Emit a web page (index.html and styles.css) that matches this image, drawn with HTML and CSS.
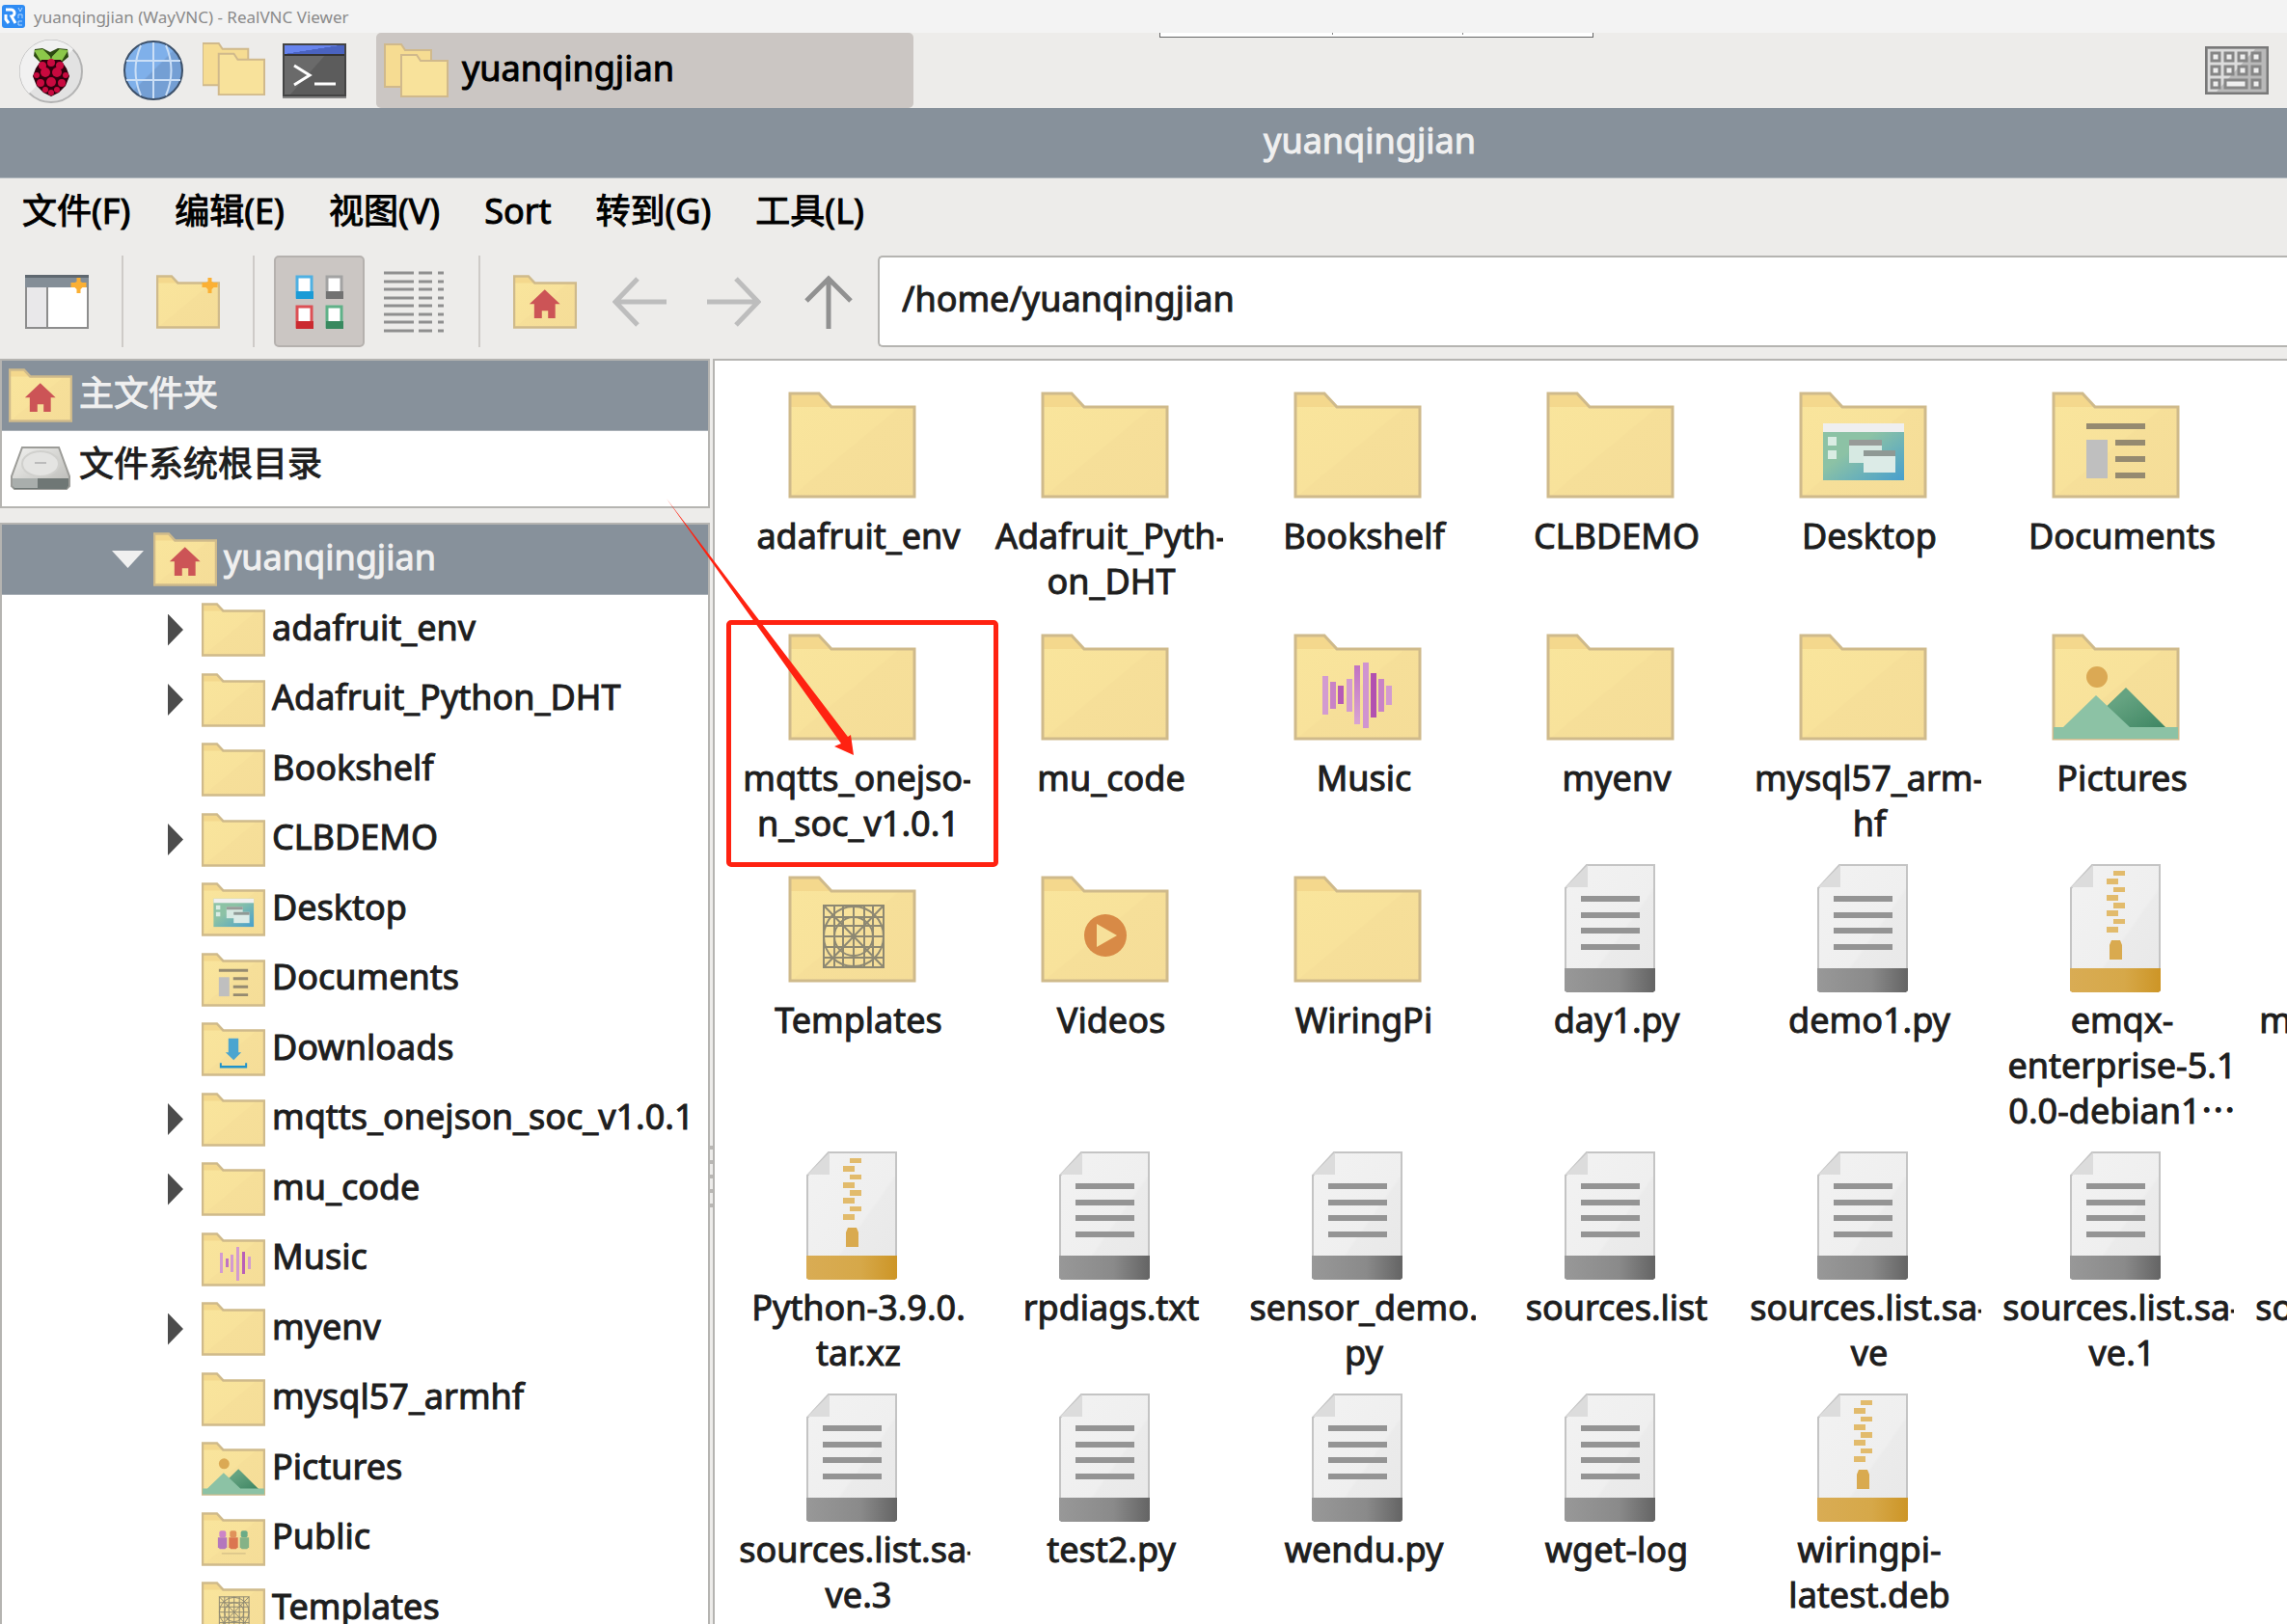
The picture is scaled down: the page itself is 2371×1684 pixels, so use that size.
FILE: index.html
```html
<!DOCTYPE html>
<html lang="zh-CN">
<head>
<meta charset="utf-8">
<title>yuanqingjian (WayVNC) - RealVNC Viewer</title>
<link rel="stylesheet" href="styles.css">
</head>
<body>
<svg class="defs" width="0" height="0" aria-hidden="true">
  <defs>
    <linearGradient id="gFolder" x1="0" y1="0" x2="1" y2="1"><stop offset="0" stop-color="#f9e59c"/><stop offset=".5" stop-color="#f8e29b"/><stop offset=".51" stop-color="#f6df99"/><stop offset="1" stop-color="#f5dd98"/></linearGradient>
    <linearGradient id="gDesk" x1="0" y1="0" x2="1" y2="1"><stop offset=".4" stop-color="#8cc2a5"/><stop offset="1" stop-color="#479fce"/></linearGradient>
    <linearGradient id="gHill" x1="0" y1="0" x2="1" y2="1"><stop offset=".3" stop-color="#65a381"/><stop offset="1" stop-color="#3d8562"/></linearGradient>
    <linearGradient id="gPage" x1="0" y1="0" x2="1" y2="1"><stop offset="0" stop-color="#f2f2f2"/><stop offset=".58" stop-color="#efefef"/><stop offset=".6" stop-color="#ebebeb"/><stop offset="1" stop-color="#e8e8e8"/></linearGradient>
    <linearGradient id="gGrey"><stop offset="0" stop-color="#989898"/><stop offset=".6" stop-color="#8a8a8a"/><stop offset="1" stop-color="#646464"/></linearGradient>
    <linearGradient id="gGold"><stop offset="0" stop-color="#d9ac54"/><stop offset=".6" stop-color="#d6a849"/><stop offset="1" stop-color="#cd9526"/></linearGradient>
    <linearGradient id="gBar" x1="0" y1="0" x2="0" y2="1"><stop offset="0" stop-color="#c173c3"/><stop offset="1" stop-color="#d9a4d2"/></linearGradient>
    <linearGradient id="gDrive" x1="0" y1="0" x2="1" y2="1"><stop offset="0" stop-color="#f2f2f0"/><stop offset="1" stop-color="#b8b8b4"/></linearGradient>
    <linearGradient id="gGlobe" x1="0" y1="0" x2="1" y2="1"><stop offset=".49" stop-color="#7fb0ea"/><stop offset=".51" stop-color="#749fd4"/></linearGradient>
    <linearGradient id="gBlue" x1="0" y1="0" x2="1" y2="1"><stop offset=".5" stop-color="#6784ee"/><stop offset=".51" stop-color="#4a63c0"/></linearGradient>
  </defs>

  <symbol id="folder" viewBox="0 0 133 111">
    <path d="M2 2H32L45 16H131V109H2Z" fill="url(#gFolder)" stroke="none"/>
    <path d="M2 2H32L45 16H2Z" fill="#f4d88d" stroke="none"/>
    <path d="M2 2H32L45 16H131V109H2Z" fill="none" stroke="#cfba8b"/>
  </symbol>

  <symbol id="e-home" viewBox="0 0 133 111"><g stroke="none"><path d="M66 30L98 60H88V90H73V74H60V90H44V60H34Z" fill="#cc5456"/></g></symbol>

  <symbol id="e-desktop" viewBox="0 0 133 111"><g stroke="none">
    <rect x="25" y="33" width="84" height="59" fill="url(#gDesk)"/><rect x="25" y="33" width="84" height="9" fill="#efeff0"/>
    <path d="M30 47h9v9h-9zM30 61h9v9h-9z" fill="#d9ece3"/>
    <rect x="52" y="50" width="34" height="24" fill="#d6e9e2"/><rect x="52" y="50" width="34" height="6" fill="#979b98"/>
    <rect x="67" y="61" width="33" height="23" fill="#dcebe7"/><rect x="67" y="61" width="33" height="6" fill="#8f9995"/></g></symbol>

  <symbol id="e-documents" viewBox="0 0 133 111"><g stroke="none"><path d="M36 33h61v6H36zM66 50h31v6H66zM66 67h31v6H66zM66 84h31v6H66z" fill="#958a70"/><rect x="36" y="50" width="22" height="40" fill="#bfbfbf"/></g></symbol>

  <symbol id="e-music" viewBox="0 0 133 111"><g stroke="none" fill="url(#gBar)">
    <rect x="30" y="44" width="6" height="40" fill="#d39bd0"/><rect x="38" y="50" width="6" height="28" fill="#c983c6"/><rect x="46" y="54" width="6" height="19" fill="#b65bb5"/><rect x="55" y="47" width="6" height="34" fill="#d39bd0"/><rect x="63" y="33" width="6" height="61"/><rect x="72" y="30" width="6" height="68" fill="#d094d0"/><rect x="80" y="41" width="6" height="46" fill="#b250b0"/><rect x="88" y="47" width="6" height="34" fill="#c983c6"/><rect x="96" y="54" width="6" height="20" fill="#d39bd0"/></g></symbol>

  <symbol id="e-music-s" viewBox="0 0 66 56"><g stroke="none" fill="#d39bd0"><rect x="19" y="21" width="3" height="21"/><rect x="25" y="27" width="3" height="9" fill="#c173c3"/><rect x="30" y="23" width="3" height="18"/><rect x="36" y="15" width="3" height="35"/><rect x="42" y="20" width="3" height="23" fill="#b95fb8"/><rect x="48" y="25" width="3" height="13"/></g></symbol>

  <symbol id="e-pictures" viewBox="0 0 133 111"><g stroke="none"><circle cx="47" cy="45" r="11" fill="#dba954"/><path d="M77 56L119 98H50V82Z" fill="url(#gHill)"/><path d="M2 97H12L46 64L81 97H131V109H2Z" fill="#8cc2a5"/></g></symbol>

  <symbol id="e-templates" viewBox="0 0 133 111"><g fill="none" stroke="#8d8872" stroke-width="2"><rect x="37" y="31" width="62" height="64"/><path d="M48 31V95M57 31V95M68 31V95M79 31V95M88 31V95M37 43H99M37 52H99M37 63H99M37 74H99M37 85H99M37 31L99 95M99 31L37 95"/><circle cx="68" cy="63" r="31"/><circle cx="68" cy="63" r="20"/></g></symbol>

  <symbol id="e-videos" viewBox="0 0 133 111"><g stroke="none"><circle cx="67" cy="62" r="22" fill="#d88a46"/><path d="M58 50L79 62L58 74Z" fill="#f7e09a"/></g></symbol>

  <symbol id="e-downloads" viewBox="0 0 133 111"><g stroke="none"><path d="M56 33H77V62H83L67 78L50 62H56Z" fill="#4ba5d0"/><path d="M38 84H42V90H91V84H95V95H38Z" fill="#1f93cb"/></g></symbol>

  <symbol id="e-public" viewBox="0 0 133 111"><g stroke="none"><rect x="37" y="38" width="14" height="14" rx="4" fill="#cc84c8"/><path d="M34 52H53V72L49 76H38L34 72Z" fill="#b477bd"/><rect x="59" y="38" width="14" height="14" rx="4" fill="#e0925a"/><path d="M57 52H76V72L72 76H61L57 72Z" fill="#db7650"/><rect x="82" y="38" width="14" height="14" rx="4" fill="#6aab87"/><path d="M80 52H99V72L95 76H84L80 72Z" fill="#85b287"/><rect x="42" y="84" width="50" height="3" fill="#d8c38a"/></g></symbol>

  <symbol id="page" viewBox="0 0 133 133">
    <path d="M42 1H112V131H20V25Z" fill="url(#gPage)" stroke="#c4c4c4" stroke-width="2"/>
    <path d="M43 1V24H20Z" fill="#dcdcdc"/>
  </symbol>
  <symbol id="text-file" viewBox="0 0 133 133"><use href="#page" width="133" height="133"/>
    <path d="M19 108H113V131L111 133H21L19 131Z" fill="url(#gGrey)"/>
    <path d="M36 33h61v6H36zM36 50h61v6H36zM36 66h61v6H36zM36 83h61v6H36z" fill="#949494"/></symbol>
  <symbol id="zip-file" viewBox="0 0 133 133"><use href="#page" width="133" height="133"/>
    <path d="M19 108H113V131L111 133H21L19 131Z" fill="url(#gGold)"/>
    <path d="M64 7h12v5H64zM57 15h12v6H57zM64 24h12v5H64zM57 32h12v6H57zM64 40h12v6H64zM57 48h12v6H57zM64 57h12v5H64zM57 65h12v6H57z" fill="#e2bb6c"/>
    <path d="M62 79H71L73 84V99H60V84Z" fill="#d9aa4f"/></symbol>

  <symbol id="folders" viewBox="0 0 67 57"><g stroke="#d0b98c" stroke-width="2">
    <path d="M1 1H18L22 7H49V45H1Z" fill="#f6dc92"/><path d="M18 12H34L38 18H66V55H18Z" fill="#f8e29b"/></g></symbol>
  <symbol id="star" viewBox="0 0 16 16"><path d="M6 0h4v4l2 1h4v5h-4l-2 2v4H6v-4l-2-2H0V5h4l2-1z" fill="#fbb034"/></symbol>
</svg>

<header class="viewer-title">
  <svg class="vnc-logo" viewBox="0 0 24 24"><rect width="24" height="24" rx="3" fill="#2f8cf4"/><path d="M4 5h5a3 3 0 0 1 1 7l4 7M4 10v5l3 4" fill="none" stroke="#fff" stroke-width="3"/><path d="M17 3l2 4 2-4M17 14v-4h4v4M21 17h-4v4h4" fill="none" stroke="#b5d6fb" stroke-width="1"/></svg>
  <span>yuanqingjian (WayVNC) - RealVNC Viewer</span>
</header>

<div class="viewer-handle" aria-hidden="true"><i></i><i></i><i></i></div>

<nav class="taskbar" aria-label="Taskbar">
  <button class="launch menu-launch" aria-label="Menu"><svg viewBox="0 0 68 68"><circle cx="34" cy="34" r="32" fill="#e2e2e2" stroke="#b3b3b3" stroke-width="2"/><path d="M11 57A32 32 0 0 1 57 11Z" fill="#f1f1f1"/>
    <path d="M17 11l8-1 8 4 8-4 10 1 1 8-6 5-12 2-12-2-6-6z" fill="#2d4a12"/><path d="M18 13l7-1 7 7 1 3-9 1zM50 13l-7-1-7 7-1 3 9 1z" fill="#8cc84a" stroke="#8cc84a" stroke-width="2"/>
    <path d="M24 22h20l6 9 3 8-4 10-7 7-8 4-8-4-7-7-4-10 3-8z" fill="#30000d"/>
    <g fill="#c9093f"><circle cx="34" cy="25" r="4"/><circle cx="25" cy="28" r="4"/><circle cx="43" cy="28" r="4"/><circle cx="28" cy="35" r="5"/><circle cx="40" cy="35" r="5"/><circle cx="19" cy="38" r="3"/><circle cx="49" cy="38" r="3"/><circle cx="34" cy="45" r="5"/><circle cx="23" cy="46" r="4"/><circle cx="45" cy="46" r="4"/><circle cx="28" cy="53" r="3"/><circle cx="40" cy="53" r="3"/><circle cx="34" cy="56" r="3"/></g></svg></button>
  <button class="launch" aria-label="Web"><svg viewBox="1 0 66 66"><circle cx="33" cy="33" r="30" fill="url(#gGlobe)" stroke="#3c5069" stroke-width="2"/><path d="M33 4V62M5 23H61M5 43H61M20 7Q9 33 20 59M46 7Q57 33 46 59" fill="none" stroke="#cbdff6" stroke-width="2"/></svg></button>
  <button class="launch" aria-label="Files"><svg viewBox="1 -4 67 67"><use href="#folders" width="67" height="57"/></svg></button>
  <button class="launch" aria-label="Terminal"><svg viewBox="0 0 66 66"><rect y="5" width="66" height="56" rx="1" fill="#5c5c5c"/><path d="M2 15H46L8 58H2Z" fill="#6a6a6a"/><rect x="1" y="6" width="64" height="10" fill="url(#gBlue)"/><rect x="1" y="16" width="64" height="2" fill="#333"/><rect x="1" y="6" width="64" height="53" fill="none" stroke="#444" stroke-width="2"/><path d="M0 60H66V62H0Z" fill="#848484"/><path d="M12 28L28 38L12 48" fill="none" stroke="#fff" stroke-width="3"/><path d="M33 47H55" stroke="#fff" stroke-width="3"/></svg></button>
  <button class="task"><svg class="task-icon" viewBox="0 0 67 57"><use href="#folders"/></svg><span class="cap">yuanqingjian</span></button>
  <button class="tray" aria-label="Keyboard"><svg viewBox="0 0 66 50"><rect x="1" y="1" width="64" height="48" fill="#b9b9b9" stroke="#797979" stroke-width="3"/><path d="M3 3H52L12 47H3Z" fill="#dcdcdc"/><g fill="#efefef" stroke="#868686" stroke-width="3"><path d="M7 7h8v8H7zM21 7h8v8h-8zM35 7h8v8h-8zM49 7h8v8h-8zM7 21h8v8H7zM21 21h8v8h-8zM35 21h8v8h-8zM49 21h8v8h-8zM7 35h8v8H7zM21 35h22v8H21zM49 35h8v8h-8z"/></g></svg></button>
</nav>

<div class="window-title"><span class="cap">yuanqingjian</span></div>

<nav class="menubar" aria-label="Menu bar">
  <button>文件(F)</button><button>编辑(E)</button><button>视图(V)</button><button>Sort</button><button>转到(G)</button><button>工具(L)</button>
</nav>

<div class="toolbar">
  <button aria-label="New window"><svg width="66" height="56" viewBox="0 0 66 56"><rect x="1" y="1" width="64" height="54" fill="#fff" stroke="#8d8d8d" stroke-width="2"/><rect x="2" y="13" width="21" height="41" fill="#e9e8ea"/><path d="M23 13V54" stroke="#8d8d8d" stroke-width="2"/><rect width="66" height="13" fill="#848e97"/><rect width="66" height="3" fill="#5f6870"/><use href="#star" x="47" y="3" width="17" height="16"/></svg></button>
  <i class="sep"></i>
  <button aria-label="New folder"><svg width="66" height="56" viewBox="0 0 66 56" class="sm"><use href="#folder" width="66" height="56"/><use href="#star" x="47" y="3" width="17" height="16"/></svg></button>
  <i class="sep"></i>
  <button class="on" aria-label="Icon view" aria-pressed="true"><svg width="50" height="56" viewBox="0 0 50 56">
    <g fill="#fff" stroke-width="3"><rect x="2" y="2" width="15" height="21" stroke="#4fb0e2"/><rect x="33" y="2" width="15" height="21" stroke="#a3a3a3"/><rect x="2" y="33" width="15" height="21" stroke="#dc5055"/><rect x="33" y="33" width="15" height="21" stroke="#5fb188"/></g>
    <path d="M1 17h18v8H1z" fill="#1b9bd6"/><path d="M32 17h18v8H32z" fill="#727272"/><path d="M1 48h18v8H1z" fill="#cb2a30"/><path d="M32 48h18v8H32z" fill="#38895f"/></svg></button>
  <button aria-label="List view"><svg width="62" height="64" viewBox="0 0 62 64"><path d="M0 2H31M0 11H31M0 19H31M0 28H31M0 36H31M0 45H31M0 53H31M0 62H31M36 2H50M36 11H50M36 19H50M36 28H50M36 36H50M36 45H50M36 53H50M36 62H50M56 2H62M56 11H62M56 19H62M56 28H62M56 36H62M56 45H62M56 53H62M56 62H62" stroke="#8f8f8f" stroke-width="3"/></svg></button>
  <i class="sep"></i>
  <button aria-label="Home"><svg width="66" height="56" viewBox="0 0 66 56" class="sm"><use href="#folder" width="66" height="56"/><use href="#e-home" width="66" height="56"/></svg></button>
  <button aria-label="Back"><svg width="56" height="56" viewBox="0 0 56 56"><path d="M56 28H3M26 4L3 28L26 52" fill="none" stroke="#bdbdbd" stroke-width="5"/></svg></button>
  <button aria-label="Forward"><svg width="56" height="56" viewBox="0 0 56 56"><path d="M0 28H53M30 4L53 28L30 52" fill="none" stroke="#bdbdbd" stroke-width="5"/></svg></button>
  <button aria-label="Up"><svg width="50" height="56" viewBox="0 0 50 56"><path d="M25 56V4M2 27L25 4L48 27" fill="none" stroke="#919191" stroke-width="5"/></svg></button>
  <input class="path" type="text" value="/home/yuanqingjian" aria-label="Path">
</div>

<main class="panes">
  <aside class="side">
    <ul class="places">
      <li><a href="#" class="row sel"><svg class="sm"><use href="#folder"/><use href="#e-home"/></svg><span class="cap">主文件夹</span></a></li>
      <li><a href="#" class="row"><svg class="sm" viewBox="0 0 66 56"><path d="M14 8H52L63 38V48L60 51H6L3 48V38Z" fill="url(#gDrive)" stroke="#9c9c98" stroke-width="2"/><ellipse cx="33" cy="25" rx="19" ry="13" fill="#e4e4e2" stroke="#d0d0cd" stroke-width="2"/><path d="M27 24H39" stroke="#bbb" stroke-width="2"/><path d="M4 40H62V48L60 51H6L4 48Z" fill="#6f7775"/><path d="M4 40H30V50H6L4 48Z" fill="#a9aeac"/></svg><span class="cap">文件系统根目录</span></a></li>
    </ul>
    <ul class="tree">
      <li><a href="#" class="row sel root"><i class="tri open"></i><svg class="sm"><use href="#folder"/><use href="#e-home"/></svg><span class="cap">yuanqingjian</span></a></li>
      <li><a href="#" class="row"><i class="tri"></i><svg class="sm"><use href="#folder"/></svg><span class="cap">adafruit_env</span></a></li>
      <li><a href="#" class="row"><i class="tri"></i><svg class="sm"><use href="#folder"/></svg><span class="cap">Adafruit_Python_DHT</span></a></li>
      <li><a href="#" class="row"><i class="tri none"></i><svg class="sm"><use href="#folder"/></svg><span class="cap">Bookshelf</span></a></li>
      <li><a href="#" class="row"><i class="tri"></i><svg class="sm"><use href="#folder"/></svg><span class="cap">CLBDEMO</span></a></li>
      <li><a href="#" class="row"><i class="tri none"></i><svg class="sm"><use href="#folder"/><use href="#e-desktop"/></svg><span class="cap">Desktop</span></a></li>
      <li><a href="#" class="row"><i class="tri none"></i><svg class="sm"><use href="#folder"/><use href="#e-documents"/></svg><span class="cap">Documents</span></a></li>
      <li><a href="#" class="row"><i class="tri none"></i><svg class="sm"><use href="#folder"/><use href="#e-downloads"/></svg><span class="cap">Downloads</span></a></li>
      <li><a href="#" class="row"><i class="tri"></i><svg class="sm"><use href="#folder"/></svg><span class="cap">mqtts_onejson_soc_v1.0.1</span></a></li>
      <li><a href="#" class="row"><i class="tri"></i><svg class="sm"><use href="#folder"/></svg><span class="cap">mu_code</span></a></li>
      <li><a href="#" class="row"><i class="tri none"></i><svg class="sm"><use href="#folder"/><use href="#e-music-s"/></svg><span class="cap">Music</span></a></li>
      <li><a href="#" class="row"><i class="tri"></i><svg class="sm"><use href="#folder"/></svg><span class="cap">myenv</span></a></li>
      <li><a href="#" class="row"><i class="tri none"></i><svg class="sm"><use href="#folder"/></svg><span class="cap">mysql57_armhf</span></a></li>
      <li><a href="#" class="row"><i class="tri none"></i><svg class="sm"><use href="#folder"/><use href="#e-pictures"/></svg><span class="cap">Pictures</span></a></li>
      <li><a href="#" class="row"><i class="tri none"></i><svg class="sm"><use href="#folder"/><use href="#e-public"/></svg><span class="cap">Public</span></a></li>
      <li><a href="#" class="row"><i class="tri none"></i><svg class="sm"><use href="#folder"/><use href="#e-templates"/></svg><span class="cap">Templates</span></a></li>
    </ul>
  </aside>

  <div class="splitter" aria-hidden="true"><i></i><i></i><i></i><i></i><i></i></div>

  <section class="files">
    <ul class="grid">
      <li><svg class="lg"><use href="#folder" y="12" height="111"/></svg><span>adafruit_env</span></li>
      <li><svg class="lg"><use href="#folder" y="12" height="111"/></svg><span>Adafruit_Pyth-<br>on_DHT</span></li>
      <li><svg class="lg"><use href="#folder" y="12" height="111"/></svg><span>Bookshelf</span></li>
      <li><svg class="lg"><use href="#folder" y="12" height="111"/></svg><span>CLBDEMO</span></li>
      <li><svg class="lg"><use href="#folder" y="12" height="111"/><use href="#e-desktop" y="12" height="111"/></svg><span>Desktop</span></li>
      <li><svg class="lg"><use href="#folder" y="12" height="111"/><use href="#e-documents" y="12" height="111"/></svg><span>Documents</span></li>
      <li></li>

      <li><svg class="lg"><use href="#folder" y="12" height="111"/></svg><span>mqtts_onejso-<br>n_soc_v1.0.1</span></li>
      <li><svg class="lg"><use href="#folder" y="12" height="111"/></svg><span>mu_code</span></li>
      <li><svg class="lg"><use href="#folder" y="12" height="111"/><use href="#e-music" y="12" height="111"/></svg><span>Music</span></li>
      <li><svg class="lg"><use href="#folder" y="12" height="111"/></svg><span>myenv</span></li>
      <li><svg class="lg"><use href="#folder" y="12" height="111"/></svg><span>mysql57_arm-<br>hf</span></li>
      <li><svg class="lg"><use href="#folder" y="12" height="111"/><use href="#e-pictures" y="12" height="111"/></svg><span>Pictures</span></li>
      <li></li>

      <li><svg class="lg"><use href="#folder" y="12" height="111"/><use href="#e-templates" y="12" height="111"/></svg><span>Templates</span></li>
      <li><svg class="lg"><use href="#folder" y="12" height="111"/><use href="#e-videos" y="12" height="111"/></svg><span>Videos</span></li>
      <li><svg class="lg"><use href="#folder" y="12" height="111"/></svg><span>WiringPi</span></li>
      <li><svg class="lg"><use href="#text-file"/></svg><span>day1.py</span></li>
      <li><svg class="lg"><use href="#text-file"/></svg><span>demo1.py</span></li>
      <li><svg class="lg"><use href="#zip-file"/></svg><span>emqx-<br>enterprise-5.1<br>0.0-debian1<b class="dots">…</b></span></li>
      <li><svg class="lg"><use href="#text-file"/></svg><span>mqtts_onejso-</span></li>

      <li><svg class="lg"><use href="#zip-file"/></svg><span>Python-3.9.0.<br>tar.xz</span></li>
      <li><svg class="lg"><use href="#text-file"/></svg><span>rpdiags.txt</span></li>
      <li><svg class="lg"><use href="#text-file"/></svg><span>sensor_demo.<br>py</span></li>
      <li><svg class="lg"><use href="#text-file"/></svg><span>sources.list</span></li>
      <li><svg class="lg"><use href="#text-file"/></svg><span>sources.list.sa-<br>ve</span></li>
      <li><svg class="lg"><use href="#text-file"/></svg><span>sources.list.sa-<br>ve.1</span></li>
      <li><svg class="lg"><use href="#text-file"/></svg><span>sources.list.sa-</span></li>

      <li><svg class="lg"><use href="#text-file"/></svg><span>sources.list.sa-<br>ve.3</span></li>
      <li><svg class="lg"><use href="#text-file"/></svg><span>test2.py</span></li>
      <li><svg class="lg"><use href="#text-file"/></svg><span>wendu.py</span></li>
      <li><svg class="lg"><use href="#text-file"/></svg><span>wget-log</span></li>
      <li><svg class="lg"><use href="#zip-file"/></svg><span>wiringpi-<br>latest.deb</span></li>
    </ul>
    <div class="mark-box" aria-hidden="true"></div>
    <svg class="mark-arrow" viewBox="0 0 194 266" aria-hidden="true"><path d="M0 0L188 247L191 245L194 266L174 257L181 254Z" fill="#ff2211"/></svg>
  </section>
</main>
</body>
</html>
```
FILE: styles.css
```css
* { box-sizing: border-box; }

body {
  margin: 0;
  height: 100vh;
  display: flex;
  flex-direction: column;
  overflow: hidden;
  position: relative;
  background: #edecea;
  color: #1e1e1e;
  font: 400 36px/47px "Noto Sans", "Noto Sans CJK SC", sans-serif;
  -webkit-text-stroke: 1px currentColor;
}

button, input { font: inherit; color: inherit; }
button { border: 0; padding: 0; background: none; }
ul { list-style: none; margin: 0; padding: 0; }
a { color: inherit; text-decoration: none; }
svg { display: block; flex: none; }
.defs { position: absolute; }
.cap { margin-bottom: 6px; white-space: nowrap; }

/* Viewer window title */
.viewer-title {
  flex: none;
  height: 34px;
  display: flex;
  align-items: center;
  gap: 9px;
  padding-left: 2px;
  background: #f3f3f3;
  color: #8a8a8a;
  font: 400 17px/24px "Noto Sans", sans-serif;
  -webkit-text-stroke: 0;
}
.viewer-title span { padding-top: 2px; }
.vnc-logo { width: 24px; height: 24px; }

/* Collapsed viewer toolbar peeking from the top edge */
.viewer-handle {
  position: absolute;
  top: 34px;
  left: 1202px;
  width: 450px;
  height: 5px;
  display: grid;
  grid-template-columns: 178px 135px 1fr;
  background: #fff;
  border: solid #666;
  border-width: 0 1px 1px;
}
.viewer-handle i + i { border-left: 1px solid #888; height: 2px; }

/* Taskbar */
.taskbar {
  flex: none;
  height: 78px;
  display: flex;
  align-items: center;
  padding: 0 19px;
  color: #000;
}
.launch { width: 66px; height: 66px; margin-right: 17px; }
.launch svg { width: 66px; height: 66px; }
.menu-launch { width: 68px; margin-right: 40px; }
.menu-launch svg { width: 68px; height: 68px; }
.task {
  width: 557px;
  height: 78px;
  margin-left: 14px;
  padding: 0 8px;
  display: flex;
  align-items: center;
  gap: 14px;
  background: #cbc6c3;
  border-radius: 5px;
}
.task-icon { width: 67px; height: 57px; }
.tray { margin-left: auto; }
.tray svg { width: 66px; height: 50px; }

/* File manager window */
.window-title {
  flex: none;
  height: 73px;
  display: flex;
  align-items: center;
  justify-content: center;
  padding-left: 469px;
  background: #87919b;
  border-bottom: 1px solid #b1b8be;
  color: #f0f0f0;
}
.menubar {
  flex: none;
  height: 66px;
  display: flex;
  align-items: center;
  gap: 46px;
  padding-left: 23px;
  color: #000;
}
.toolbar {
  flex: none;
  display: flex;
  align-items: center;
  gap: 4px;
  padding: 14px 0 12px 12px;
}
.toolbar button {
  flex: none;
  width: 94px;
  height: 95px;
  display: grid;
  place-items: center;
}
.toolbar .on {
  background: #cbc6c3;
  border: 2px solid #b5b1ae;
  border-radius: 5px;
}
.sep { flex: none; width: 2px; height: 95px; margin: 0 16px; background: #cecbc8; }
.path {
  flex: 1;
  min-width: 0;
  height: 95px;
  padding: 0 23px 6px;
  background: #fff;
  border: 2px solid #b5b4b1;
  border-right: 0;
  border-radius: 5px 0 0 5px;
  outline: 0;
}

/* Panes */
.panes { flex: 1; min-height: 0; display: flex; }
.side { flex: none; width: 736px; display: flex; flex-direction: column; gap: 15px; }
.places, .tree { background: #fff; border: 2px solid #b5b4b1; }
.places { flex: none; height: 155px; }
.tree {
  flex: 1;
  min-height: 0;
  display: grid;
  grid-auto-rows: 73px 72px;
  overflow: hidden;
  border-bottom: 0;
}
.row { height: 73px; display: flex; align-items: center; gap: 7px; padding-left: 7px; }
.sel { background: #87919b; border-bottom: 1px solid #a9b0b7; color: #f0f0f0; }
.tree .row { padding-left: 172px; height: 100%; }
.tree .root { padding-left: 114px; }
.sm { width: 66px; height: 56px; stroke-width: 5px; }
.lg { width: 133px; height: 133px; stroke-width: 3px; }

.tri {
  flex: none;
  width: 16px;
  height: 33px;
  margin-right: 12px;
  background: #4c4c4c;
  clip-path: polygon(0 0, 100% 50%, 0 100%);
}
.tri.none { visibility: hidden; }
.tri.open {
  width: 33px;
  height: 18px;
  margin-right: 3px;
  background: #f0f0f0;
  clip-path: polygon(0 0, 100% 0, 50% 100%);
}

.splitter {
  flex: none;
  width: 3px;
  display: flex;
  flex-direction: column;
  justify-content: center;
  gap: 11px;
  padding-top: 384px;
}
.splitter i { height: 4px; background: #b9b7b4; }

/* Icon view */
.files {
  flex: 1;
  min-width: 0;
  position: relative;
  overflow: hidden;
  background: #fff;
  border: solid #b5b4b1;
  border-width: 2px 0 0 2px;
}
.grid {
  display: grid;
  grid-template-columns: repeat(7, 262px);
  row-gap: 19px;
  padding: 20px 0 0 3px;
}
.grid li { overflow: hidden; min-height: 232px; }
.grid svg { margin-left: 73px; }
.grid span {
  display: block;
  width: 248px;
  margin: 5px 0 0 22px;
  text-align: center;
  white-space: nowrap;
}
.dots {
  display: inline-block;
  font: 700 36px/36px "Noto Sans CJK SC", sans-serif;
  -webkit-text-stroke: 0;
}

/* Annotation over the icon view */
.mark-box {
  position: absolute;
  top: 269px;
  left: 12px;
  width: 282px;
  height: 256px;
  border: 5px solid #ff2211;
  border-radius: 5px;
}
.mark-arrow {
  position: fixed;
  top: 517px;
  left: 691px;
  width: 194px;
  height: 266px;
}
```
